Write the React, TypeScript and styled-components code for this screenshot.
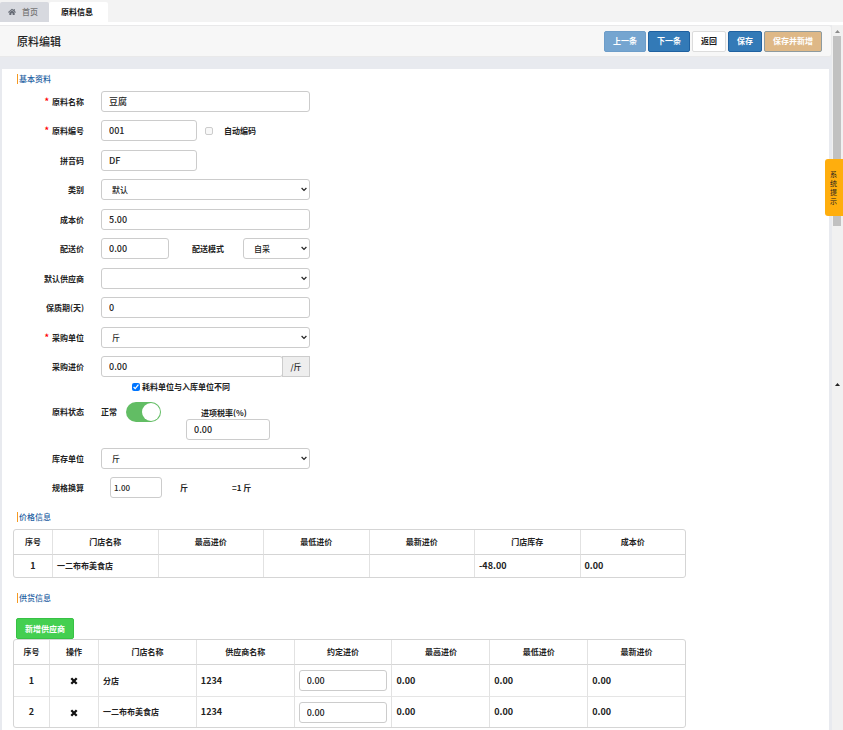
import React, { useId } from "react";
import styled, { createGlobalStyle, css } from "styled-components";
import { FaHome } from "react-icons/fa";

const GlobalStyle = createGlobalStyle`
  *, *::before, *::after { box-sizing: border-box; }
  body { margin: 0; background: #fff; }
  body, button, input, select, table {
    font-family: "Noto Sans CJK SC", "Noto Sans", sans-serif;
    font-size: 8px;
    font-weight: 700;
    line-height: 12px;
    color: #222;
  }
`;

const Page = styled.div`
  display: flex;
  flex-direction: column;
  min-height: 100vh;
  position: relative;
`;

const TabBar = styled.nav`
  display: flex;
  height: 22px;
  margin-bottom: 3px;
  background: #f3f3f3;
`;

const Tab = styled.a<{ $active?: boolean }>`
  display: flex;
  align-items: center;
  gap: 6px;
  width: ${(p) => (p.$active ? 59 : 49)}px;
  margin-top: 2px;
  padding-left: ${(p) => (p.$active ? 12 : 8)}px;
  border-radius: 2px 2px 0 0;
  text-decoration: none;
  font-weight: ${(p) => (p.$active ? 700 : 500)};
  background: ${(p) => (p.$active ? "#fff" : "#d7d9df")};
  color: ${(p) => (p.$active ? "#111" : "#777")};
  svg { color: #666b75; }
`;

const Body = styled.div`
  display: flex;
  flex: 1;
`;

const Main = styled.main`
  flex: 1;
  min-width: 0;
  display: flex;
  flex-direction: column;
  background: #e8eaef;
`;

const Header = styled.header`
  display: flex;
  align-items: center;
  justify-content: space-between;
  height: 32px;
  padding: 0 9px 0 17px;
  margin-bottom: 12px;
  background: #f7f7f7;
  border: solid #e9e9ea;
  border-width: 1px 1px 1px 0;
  border-radius: 0 3px 3px 0;
`;

const Title = styled.h1`
  margin: 0;
  font-size: 11px;
  line-height: 16px;
  font-weight: 500;
`;

const Actions = styled.div`
  display: flex;
  gap: 2px;
`;

type Tone = "muted" | "primary" | "plain" | "sand" | "green";
const tones: Record<Tone, [string, string, string]> = {
  muted: ["#75a5d0", "#6d9dc9", "#fff"],
  primary: ["#337ab7", "#1f61a0", "#fff"],
  plain: ["#fff", "#dcdcdc", "#1c1c1c"],
  sand: ["#deb887", "#8e9b9f", "#fff"],
  green: ["#44cf50", "#38c145", "#fff"],
};

const Button = styled.button<{ $tone: Tone }>`
  height: 21px;
  padding: 0 8px;
  border: 1px solid ${(p) => tones[p.$tone][1]};
  border-radius: 2px;
  background: ${(p) => tones[p.$tone][0]};
  color: ${(p) => tones[p.$tone][2]};
  white-space: nowrap;
`;

const Panel = styled.div`
  flex: 1;
  margin: 0 3px 0 2px;
  padding: 5px 11px 2px;
  background: #fff;
`;

const SectionTitle = styled.h2`
  margin: 0 0 0 4px;
  padding-left: 1px;
  border-left: 1px solid #f59a23;
  width: max-content;
  font-size: 8px;
  line-height: 10px;
  font-weight: 500;
  color: #1f62a3;
`;

const Form = styled.form`
  padding: 7px 0 5px;
`;

const Row = styled.div<{ $tight?: boolean }>`
  display: flex;
  align-items: center;
  height: 21px;
  margin-bottom: 8px;
  &:nth-child(even) { margin-bottom: ${(p) => (p.$tight ? 4 : 9)}px; }
`;

const Label = styled.label`
  flex: none;
  width: 71px;
  margin-right: 17px;
  text-align: right;
`;

const Star = styled.span`
  margin-right: 3px;
  font-size: 9px;
  color: #f00;
`;

const Controls = styled.div`
  display: flex;
  align-items: center;
  flex: 0 1 209px;
`;

const control = css`
  height: 21px;
  border: 1px solid #ccc;
  border-radius: 3px;
  background: #fff;
  outline: none;
  min-width: 0;
  font-weight: 500;
`;

const Input = styled.input<{ $w?: number }>`
  ${control}
  width: ${(p) => (p.$w ? `${p.$w}px` : "100%")};
  padding: 0 7px;
  font-size: 9px;
`;

const Addon = styled.span`
  display: flex;
  align-items: center;
  justify-content: center;
  flex: none;
  width: 28px;
  height: 21px;
  margin-left: -1px;
  border: 1px solid #ccc;
  background: #eee;
  font-weight: 500;
`;

const SelectBox = styled.span<{ $w?: number }>`
  position: relative;
  display: flex;
  width: ${(p) => (p.$w ? `${p.$w}px` : "100%")};
  svg { position: absolute; right: 3px; top: 8px; pointer-events: none; }
`;

const NativeSelect = styled.select`
  ${control}
  appearance: none;
  width: 100%;
  padding: 0 10px;
`;

const InlineLabel = styled.label<{ $before: number; $after?: number }>`
  margin: 0 ${(p) => p.$after ?? 0}px 0 ${(p) => p.$before}px;
  white-space: nowrap;
`;

const Check = styled.input`
  width: 8px;
  height: 8px;
  margin: 0;
`;

const OffCheck = styled(Check)`
  appearance: none;
  margin-left: 8px;
  border: 1px solid #ccc;
  border-radius: 2px;
  background: #f8f8f8;
`;

const CheckRow = styled.label`
  display: flex;
  align-items: center;
  gap: 2px;
  width: max-content;
  height: 12px;
  margin-left: 119px;
`;

const StatusRow = styled.div`
  display: flex;
  align-items: flex-start;
  margin: 9px 0 8px;
  line-height: 20px;
`;

const StateText = styled.span`
  flex: none;
  width: 25px;
`;

const Switch = styled.input`
  appearance: none;
  flex: none;
  width: 35px;
  height: 20px;
  margin: 0 25px 0 0;
  padding: 1px;
  border-radius: 10px;
  background: #62bd64;
  &::before {
    content: "";
    display: block;
    width: 18px;
    height: 18px;
    margin-left: 15px;
    border-radius: 50%;
    background: #fff;
  }
`;

const TaxField = styled.div`
  display: flex;
  flex-direction: column;
  padding-top: 5px;
  line-height: 12px;
  label { margin-left: 15px; }
`;

const Unit = styled.span<{ $gap: number }>`
  margin-left: ${(p) => p.$gap}px;
`;

const RatioInput = styled(Input)`
  margin-left: 9px;
  padding: 0 3px;
  font-size: 8px;
`;

const Table = styled.table`
  width: 100%;
  max-width: 673px;
  table-layout: fixed;
  border-collapse: separate;
  border-spacing: 0;
  border: 1px solid #d5d5d5;
  border-radius: 3px;
`;

const Th = styled.th<{ $w?: number }>`
  width: ${(p) => (p.$w ? `${p.$w}px` : "auto")};
  height: 25px;
  padding: 0;
  border-bottom: 1px solid #d5d5d5;
  & + & { border-left: 1px solid #e2e2e2; }
`;

const Td = styled.td<{ $center?: boolean; $h: number }>`
  height: ${(p) => p.$h}px;
  padding: 0 4px;
  text-align: ${(p) => (p.$center ? "center" : "left")};
  & + & { border-left: 1px solid #e2e2e2; }
  tr + tr > & { border-top: 1px solid #e5e5e5; }
`;

const Num = styled.span`
  font-size: 9px;
  font-weight: 700;
`;

const IconButton = styled.button`
  display: inline-flex;
  vertical-align: middle;
  padding: 0;
  border: 0;
  background: none;
`;

const Section = styled.section`
  padding-top: 15px;
`;

const PriceTable = styled(Table)`
  margin-top: 7px;
`;

const AddButton = styled(Button)`
  display: block;
  margin: 15px 0 0 3px;
`;

const ScrollTrack = styled.div`
  flex: none;
  display: flex;
  flex-direction: column;
  align-items: center;
  width: 11px;
  padding: 5px 1px 0 0;
  background: #f1f1f1;
`;

const Thumb = styled.div`
  width: 8px;
  height: 190px;
  margin: 3px 0 157px;
  background: #c1c1c1;
`;

const ArrowIcon = styled.svg`
  flex: none;
`;

const Tip = styled.button`
  position: absolute;
  right: 0;
  top: 159px;
  width: 18px;
  height: 57px;
  padding: 0 6px 0 5px;
  border: 0;
  border-radius: 3px 0 0 3px;
  background: #ffae0d;
  font-size: 7px;
  font-weight: 400;
  line-height: 9px;
  word-break: break-all;
`;

const Arrow = ({ dark }: { dark?: boolean }) => (
  <ArrowIcon width="5" height="3" viewBox="0 0 5 3">
    <path d="M0 3 2.5 0 5 3Z" fill={dark ? "#222" : "#8b8b8b"} />
  </ArrowIcon>
);

const Cross = () => (
  <svg width="8" height="8" viewBox="0 0 8 8">
    <path d="M1.3 1.3 6.7 6.7M6.7 1.3 1.3 6.7" stroke="#111" strokeWidth="2.3" />
  </svg>
);

function Select({ id, value, w }: { id: string; value: string; w?: number }) {
  return (
    <SelectBox $w={w}>
      <NativeSelect id={id} defaultValue={value}>
        <option>{value}</option>
      </NativeSelect>
      <svg width="6" height="5" viewBox="0 0 6 5">
        <path d="M.6 1 3 3.4 5.4 1" fill="none" stroke="#222" strokeWidth="1.2" />
      </svg>
    </SelectBox>
  );
}

function Field({ label, required, tight, children }: {
  label: string;
  required?: boolean;
  tight?: boolean;
  children: (id: string) => React.ReactNode;
}) {
  const id = useId();
  return (
    <Row $tight={tight}>
      <Label htmlFor={id}>
        {required && <Star>*</Star>}
        {label}
      </Label>
      <Controls>{children(id)}</Controls>
    </Row>
  );
}

const suppliers = [
  { store: "分店", supplier: "1234" },
  { store: "一二布布美食店", supplier: "1234" },
];

export default function App() {
  return (
    <Page>
      <GlobalStyle />
      <TabBar>
        <Tab href="#home"><FaHome size={8} />首页</Tab>
        <Tab href="#material" $active>原料信息</Tab>
      </TabBar>
      <Body>
        <Main>
          <Header>
            <Title>原料编辑</Title>
            <Actions>
              <Button $tone="muted">上一条</Button>
              <Button $tone="primary">下一条</Button>
              <Button $tone="plain">返回</Button>
              <Button $tone="primary">保存</Button>
              <Button $tone="sand">保存并新增</Button>
            </Actions>
          </Header>
          <Panel>
            <SectionTitle>基本资料</SectionTitle>
            <Form>
              <Field label="原料名称" required>{(id) => <Input id={id} defaultValue="豆腐" />}</Field>
              <Field label="原料编号" required>
                {(id) => (
                  <>
                    <Input id={id} $w={96} defaultValue="001" />
                    <OffCheck id="auto-code" type="checkbox" />
                    <InlineLabel $before={11} htmlFor="auto-code">自动编码</InlineLabel>
                  </>
                )}
              </Field>
              <Field label="拼音码">{(id) => <Input id={id} $w={96} defaultValue="DF" />}</Field>
              <Field label="类别">{(id) => <Select id={id} value="默认" />}</Field>
              <Field label="成本价">{(id) => <Input id={id} defaultValue="5.00" />}</Field>
              <Field label="配送价">
                {(id) => (
                  <>
                    <Input id={id} $w={68} defaultValue="0.00" />
                    <InlineLabel $before={23} $after={19} htmlFor="delivery-mode">配送模式</InlineLabel>
                    <Select id="delivery-mode" w={67} value="自采" />
                  </>
                )}
              </Field>
              <Field label="默认供应商">{(id) => <Select id={id} value="" />}</Field>
              <Field label="保质期(天)">{(id) => <Input id={id} defaultValue="0" />}</Field>
              <Field label="采购单位" required>{(id) => <Select id={id} value="斤" />}</Field>
              <Field label="采购进价" tight>
                {(id) => (
                  <>
                    <Input id={id} defaultValue="0.00" />
                    <Addon>/斤</Addon>
                  </>
                )}
              </Field>
              <CheckRow>
                <Check type="checkbox" defaultChecked />
                耗料单位与入库单位不同
              </CheckRow>
              <StatusRow>
                <Label htmlFor="state">原料状态</Label>
                <StateText>正常</StateText>
                <Switch id="state" type="checkbox" role="switch" defaultChecked />
                <TaxField>
                  <label htmlFor="tax">进项税率(%)</label>
                  <Input id="tax" $w={84} defaultValue="0.00" />
                </TaxField>
              </StatusRow>
              <Field label="库存单位">{(id) => <Select id={id} value="斤" />}</Field>
              <Field label="规格换算">
                {(id) => (
                  <>
                    <RatioInput id={id} $w={52} defaultValue="1.00" />
                    <Unit $gap={18}>斤</Unit>
                    <Unit $gap={44}>=1 斤</Unit>
                  </>
                )}
              </Field>
            </Form>
            <SectionTitle>价格信息</SectionTitle>
            <PriceTable>
              <thead>
                <tr>
                  <Th $w={38}>序号</Th>
                  {["门店名称", "最高进价", "最低进价", "最新进价", "门店库存", "成本价"].map((h) => <Th key={h}>{h}</Th>)}
                </tr>
              </thead>
              <tbody>
                <tr>
                  <Td $h={22} $center><Num>1</Num></Td>
                  <Td $h={22}>一二布布美食店</Td>
                  <Td $h={22} />
                  <Td $h={22} />
                  <Td $h={22} />
                  <Td $h={22}><Num>-48.00</Num></Td>
                  <Td $h={22}><Num>0.00</Num></Td>
                </tr>
              </tbody>
            </PriceTable>
            <Section>
              <SectionTitle>供货信息</SectionTitle>
              <AddButton $tone="green">新增供应商</AddButton>
              <Table>
                <thead>
                  <tr>
                    <Th $w={35}>序号</Th>
                    <Th $w={49}>操作</Th>
                    {["门店名称", "供应商名称", "约定进价", "最高进价", "最低进价", "最新进价"].map((h) => <Th key={h}>{h}</Th>)}
                  </tr>
                </thead>
                <tbody>
                  {suppliers.map((s, i) => (
                    <tr key={s.store}>
                      <Td $h={31} $center><Num>{i + 1}</Num></Td>
                      <Td $h={31} $center>
                        <IconButton aria-label="删除"><Cross /></IconButton>
                      </Td>
                      <Td $h={31}>{s.store}</Td>
                      <Td $h={31}><Num>{s.supplier}</Num></Td>
                      <Td $h={31}><Input aria-label="约定进价" defaultValue="0.00" /></Td>
                      <Td $h={31}><Num>0.00</Num></Td>
                      <Td $h={31}><Num>0.00</Num></Td>
                      <Td $h={31}><Num>0.00</Num></Td>
                    </tr>
                  ))}
                </tbody>
              </Table>
            </Section>
          </Panel>
        </Main>
        <ScrollTrack>
          <Arrow />
          <Thumb />
          <Arrow dark />
        </ScrollTrack>
      </Body>
      <Tip>系统提示</Tip>
    </Page>
  );
}
